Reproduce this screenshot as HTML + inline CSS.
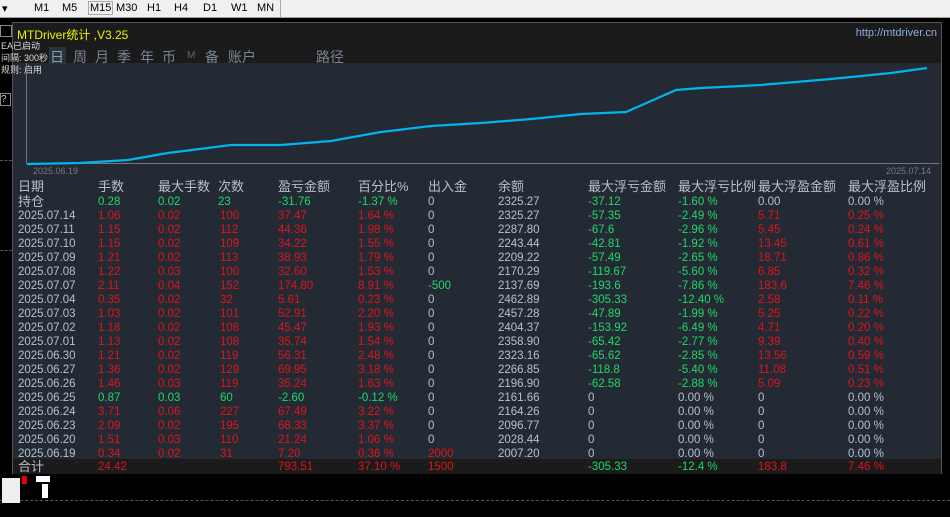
<!DOCTYPE html>
<html><head><meta charset="utf-8"><style>
*{margin:0;padding:0;box-sizing:border-box}
body{width:950px;height:517px;background:#000;position:relative;overflow:hidden;font-family:"Liberation Sans","Noto Sans CJK SC",sans-serif}
.tb{position:absolute;left:0;top:0;width:950px;height:18px;background:#f0f0f0;border-bottom:1px solid #a0a0a0;font-size:11px;color:#000}
.tb span{position:absolute;top:2px}
.panel{position:absolute;left:12px;top:22px;width:930px;height:452px;background:#232a33;border:1px solid #555}
.hdr{position:absolute;left:0;top:0;width:928px;height:40px;background:#1b1b1b}
.t{position:absolute;white-space:nowrap}
.tab{position:absolute;top:24px;color:#7a8494;font-size:14px;white-space:nowrap}
.row{position:absolute;left:0;width:928px;height:14px;font-size:11.5px;line-height:14px}
.row span{position:absolute;top:0}
.g{color:#1fd86a}.r{color:#e0141c}.w{color:#b4c0d0}
.dash{position:absolute;border-top:1px dashed #555;height:0}
</style></head><body>
<div class="tb">
<span style="left:2px">▾</span>
<span style="left:34px">M1</span><span style="left:62px">M5</span>
<span style="left:88px;border:1px solid #aaa;padding:0 1px;top:1px">M15</span>
<span style="left:116px">M30</span><span style="left:147px">H1</span><span style="left:174px">H4</span>
<span style="left:203px">D1</span><span style="left:231px">W1</span><span style="left:257px">MN</span>
<span style="left:280px;top:0;height:18px;border-left:1px solid #aaa"></span>
</div>
<div class="dash" style="left:0;top:160px;width:12px"></div>
<div class="dash" style="left:0;top:250px;width:12px"></div>
<div class="dash" style="left:0;top:500px;width:950px"></div>
<div style="position:absolute;left:0;top:25px;width:12px;height:12px;border:1px solid #888"></div>
<div style="position:absolute;left:0;top:93px;width:11px;height:13px;border:1px solid #888;color:#ccc;font-size:10px">?</div>
<div style="position:absolute;left:2px;top:478px;width:18px;height:25px;background:#eee"></div>
<div style="position:absolute;left:22px;top:476px;width:5px;height:8px;background:#e00"></div>
<div style="position:absolute;left:36px;top:476px;width:14px;height:6px;background:#fff"></div>
<div style="position:absolute;left:42px;top:484px;width:6px;height:14px;background:#fff"></div>
<div class="panel">
<div class="hdr">
<div class="t" style="left:4px;top:3px;color:#f0f000;font-size:12px">MTDriver统计 ,V3.25</div>
<div class="t" style="right:4px;top:4px;color:#8fb0e0;font-size:11px">http://mtdriver.cn</div>
<div class="t" style="left:-12px;top:16px;color:#ddd;font-size:9px">EA已启动</div>
<div class="t" style="left:-12px;top:28px;color:#ddd;font-size:9px">间隔: 300秒</div>
<div style="position:absolute;left:36px;top:24px;width:17px;height:17px;background:#2a323c"></div>
<div class="tab" style="left:37px;color:#8aa0b8">日</div>
<div class="tab" style="left:60px">周</div>
<div class="tab" style="left:82px">月</div>
<div class="tab" style="left:104px">季</div>
<div class="tab" style="left:127px">年</div>
<div class="tab" style="left:149px">币</div>
<div class="tab" style="left:174px;font-size:10px;top:27px;color:#666">M</div>
<div class="tab" style="left:192px">备</div>
<div class="tab" style="left:215px">账户</div>
<div class="tab" style="left:303px">路径</div>
</div>
<div class="t" style="left:-12px;top:40px;color:#ddd;font-size:9px">规则: 启用</div>
<div style="position:absolute;left:13px;top:40px;width:1px;height:101px;background:#777"></div>
<div style="position:absolute;left:13px;top:140px;width:913px;height:1px;background:#777"></div>
<svg style="position:absolute;left:0;top:0" width="928" height="150">
<polyline fill="none" stroke="#00b4f0" stroke-width="2.2" points="14,141 67,140 115,137 155,130 218,122 268,122 318,118 368,109 418,103 468,100 518,96 568,91 613,89 663,67 688,65 748,62 818,56 878,50 914,45"/>
</svg>
<div class="t" style="left:20px;top:143px;color:#778;font-size:9px">2025.06.19</div>
<div class="t" style="left:873px;top:143px;color:#778;font-size:9px">2025.07.14</div>
<div class="row w" style="top:157px;font-size:13px;height:16px">
<span style="left:5px">日期</span><span style="left:85px">手数</span><span style="left:145px">最大手数</span><span style="left:205px">次数</span><span style="left:265px">盈亏金额</span><span style="left:345px">百分比%</span><span style="left:415px">出入金</span><span style="left:485px">余额</span><span style="left:575px">最大浮亏金额</span><span style="left:665px">最大浮亏比例</span><span style="left:745px">最大浮盈金额</span><span style="left:835px">最大浮盈比例</span>
</div>
<div class="row" style="top:172px">
<span class="w" style="left:5px;font-size:13px">持仓</span><span class="g" style="left:85px">0.28</span><span class="g" style="left:145px">0.02</span><span class="g" style="left:205px">23</span><span class="g" style="left:265px">-31.76</span><span class="g" style="left:345px">-1.37 %</span><span class="w" style="left:415px">0</span><span class="w" style="left:485px">2325.27</span><span class="g" style="left:575px">-37.12</span><span class="g" style="left:665px">-1.60 %</span><span class="w" style="left:745px">0.00</span><span class="w" style="left:835px">0.00 %</span>
</div>
<div id="rows"></div>
<div style="position:absolute;left:0;top:436px;width:928px;height:15px;background:#1b1b1b"></div>
<div class="row" style="top:437px">
<span class="w" style="left:5px;font-size:13px">合计</span><span class="r" style="left:85px">24.42</span><span class="r" style="left:265px">793.51</span><span class="r" style="left:345px">37.10 %</span><span class="r" style="left:415px">1500</span><span class="g" style="left:575px">-305.33</span><span class="g" style="left:665px">-12.4 %</span><span class="r" style="left:745px">183.8</span><span class="r" style="left:835px">7.46 %</span>
</div>
<script>
var d=[
["2025.07.14","1.06","0.02","100","37.47","1.64 %","0","2325.27","-57.35","-2.49 %","5.71","0.25 %"],
["2025.07.11","1.15","0.02","112","44.36","1.98 %","0","2287.80","-67.6","-2.96 %","5.45","0.24 %"],
["2025.07.10","1.15","0.02","109","34.22","1.55 %","0","2243.44","-42.81","-1.92 %","13.45","0.61 %"],
["2025.07.09","1.21","0.02","113","38.93","1.79 %","0","2209.22","-57.49","-2.65 %","18.71","0.86 %"],
["2025.07.08","1.22","0.03","100","32.60","1.53 %","0","2170.29","-119.67","-5.60 %","6.85","0.32 %"],
["2025.07.07","2.11","0.04","152","174.80","8.91 %","-500","2137.69","-193.6","-7.86 %","183.6","7.46 %"],
["2025.07.04","0.35","0.02","32","5.61","0.23 %","0","2462.89","-305.33","-12.40 %","2.58","0.11 %"],
["2025.07.03","1.03","0.02","101","52.91","2.20 %","0","2457.28","-47.89","-1.99 %","5.25","0.22 %"],
["2025.07.02","1.18","0.02","108","45.47","1.93 %","0","2404.37","-153.92","-6.49 %","4.71","0.20 %"],
["2025.07.01","1.13","0.02","108","35.74","1.54 %","0","2358.90","-65.42","-2.77 %","9.39","0.40 %"],
["2025.06.30","1.21","0.02","119","56.31","2.48 %","0","2323.16","-65.62","-2.85 %","13.56","0.59 %"],
["2025.06.27","1.36","0.02","129","69.95","3.18 %","0","2266.85","-118.8","-5.40 %","11.08","0.51 %"],
["2025.06.26","1.46","0.03","119","35.24","1.63 %","0","2196.90","-62.58","-2.88 %","5.09","0.23 %"],
["2025.06.25","0.87","0.03","60","-2.60","-0.12 %","0","2161.66","0","0.00 %","0","0.00 %"],
["2025.06.24","3.71","0.06","227","67.49","3.22 %","0","2164.26","0","0.00 %","0","0.00 %"],
["2025.06.23","2.09","0.02","195","68.33","3.37 %","0","2096.77","0","0.00 %","0","0.00 %"],
["2025.06.20","1.51","0.03","110","21.24","1.06 %","0","2028.44","0","0.00 %","0","0.00 %"],
["2025.06.19","0.34","0.02","31","7.20","0.36 %","2000","2007.20","0","0.00 %","0","0.00 %"]];
var xs=[5,85,145,205,265,345,415,485,575,665,745,835],h="";
d.forEach(function(r,i){var neg=r[4].charAt(0)=="-";h+='<div class="row" style="top:'+(186+i*14)+'px">';
r.forEach(function(v,j){var c="w";if(j>=1&&j<=5)c=neg?"g":"r";if(j==6&&v!="0")c=v.charAt(0)=="-"?"g":"r";if((j==8||j==9)&&v.charAt(0)=="-")c="g";if((j==10||j==11)&&v!="0"&&v!="0.00 %")c="r";
h+='<span class="'+c+'" style="left:'+(xs[j]+(j==3?2:0))+'px">'+v+'</span>';});h+='</div>';});
document.getElementById("rows").innerHTML=h;
</script>
</div>
</body></html>
